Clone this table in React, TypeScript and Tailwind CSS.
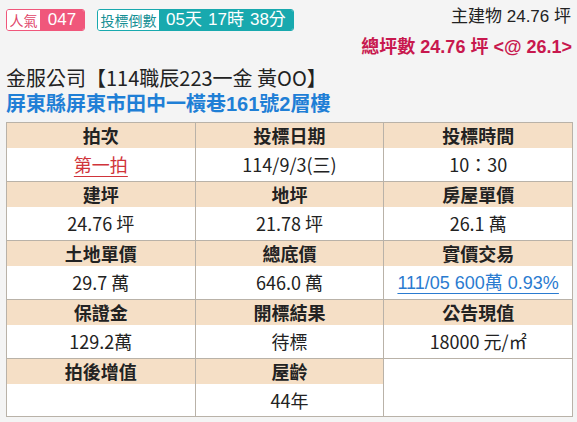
import React from 'react'

const FONT = { fontFamily: '"Liberation Sans", "Noto Sans CJK TC", sans-serif' }
const CJK = { fontFamily: '"Noto Sans CJK TC", "Liberation Sans", sans-serif' }

type Cell = { label: string; value: React.ReactNode }

const ROWS: Cell[][] = [
  [
    { label: '拍次', value: <span className="text-[#d0343a] underline decoration-[#d0343a] underline-offset-4">第一拍</span> },
    { label: '投標日期', value: '114/9/3(三)' },
    { label: '投標時間', value: '10：30' },
  ],
  [
    { label: '建坪', value: '24.76 坪' },
    { label: '地坪', value: '21.78 坪' },
    { label: '房屋單價', value: '26.1 萬' },
  ],
  [
    { label: '土地單價', value: '29.7 萬' },
    { label: '總底價', value: '646.0 萬' },
    {
      label: '實價交易',
      value: <span className="text-[#2a7bd0] underline decoration-[#2a7bd0] underline-offset-4" style={FONT}>111/05 600萬 0.93%</span>,
    },
  ],
  [
    { label: '保證金', value: '129.2萬' },
    { label: '開標結果', value: '待標' },
    { label: '公告現值', value: '18000 元/㎡' },
  ],
]

export default function App() {
  return (
    <div className="h-[422px] w-[577px] overflow-hidden bg-[#f4f4f4] text-[#222]" style={CJK}>
      <div className="flex h-[34px] items-center justify-between pl-[6px] pr-[6px] pt-[6px]">
        <div className="flex items-center gap-[12px]">
          <div className="flex h-[22px] overflow-hidden rounded-[3px] border border-[#f0577b]">
            <span className="flex w-[33px] items-center justify-center bg-white text-[14px] text-[#e0456a]">人氣</span>
            <span className="flex w-[44px] items-center justify-center bg-[#f0577b] text-[17px] text-white" style={FONT}>047</span>
          </div>
          <div className="flex h-[22px] overflow-hidden rounded-[3px] border border-[#18a9ae]">
            <span className="flex w-[61px] items-center justify-center bg-white text-[14px] text-[#168f94]">投標倒數</span>
            <span className="flex w-[134px] items-center justify-center gap-[6px] bg-[#18a9ae] text-[17px] text-white" style={FONT}>
              <span>05天</span><span>17時</span><span>38分</span>
            </span>
          </div>
        </div>
        <div className="-mt-[6px] text-[17px]" style={FONT}>主建物 24.76 坪</div>
      </div>

      <div className="flex h-[26px] items-center justify-end pr-[5px] text-[18px] font-bold text-[#c8184e]" style={FONT}>
        總坪數 24.76 坪 &lt;@ 26.1&gt;
      </div>

      <div className="mt-[5px] flex h-[26px] items-center pl-[6px] text-[20px]">金服公司【114職辰223一金 黃OO】</div>
      <div className="flex h-[26px] items-center pl-[6px] text-[20px] font-bold text-[#1f7fd6]" style={FONT}>
        屏東縣屏東市田中一橫巷161號2層樓
      </div>

      <table className="ml-[6px] mt-[5px] w-[567px] table-fixed border-collapse border border-[#a8a39c] text-center text-[18px]">
        <tbody>
          {ROWS.map((row, i) => (
            <React.Fragment key={i}>
              <tr className="h-[25px] bg-[#f5dfc6] font-bold">
                {row.map((c) => (
                  <td key={c.label} className="border-x border-t border-[#b9b2a8] p-0 leading-[24px]">{c.label}</td>
                ))}
              </tr>
              <tr className="h-[34px] bg-white">
                {row.map((c) => (
                  <td key={c.label} className="border-x border-b border-[#b9b2a8] p-0 leading-[30px]">{c.value}</td>
                ))}
              </tr>
            </React.Fragment>
          ))}
          <tr className="h-[25px] font-bold">
            <td className="border-x border-t border-[#b9b2a8] bg-[#f5dfc6] p-0 leading-[24px]">拍後增值</td>
            <td className="border-x border-t border-[#b9b2a8] bg-[#f5dfc6] p-0 leading-[24px]">屋齡</td>
            <td rowSpan={2} className="border border-[#b9b2a8] bg-white p-0"></td>
          </tr>
          <tr className="h-[33px] bg-white">
            <td className="border-x border-b border-[#b9b2a8] p-0"></td>
            <td className="border-x border-b border-[#b9b2a8] p-0 leading-[30px]">44年</td>
          </tr>
        </tbody>
      </table>
    </div>
  )
}
